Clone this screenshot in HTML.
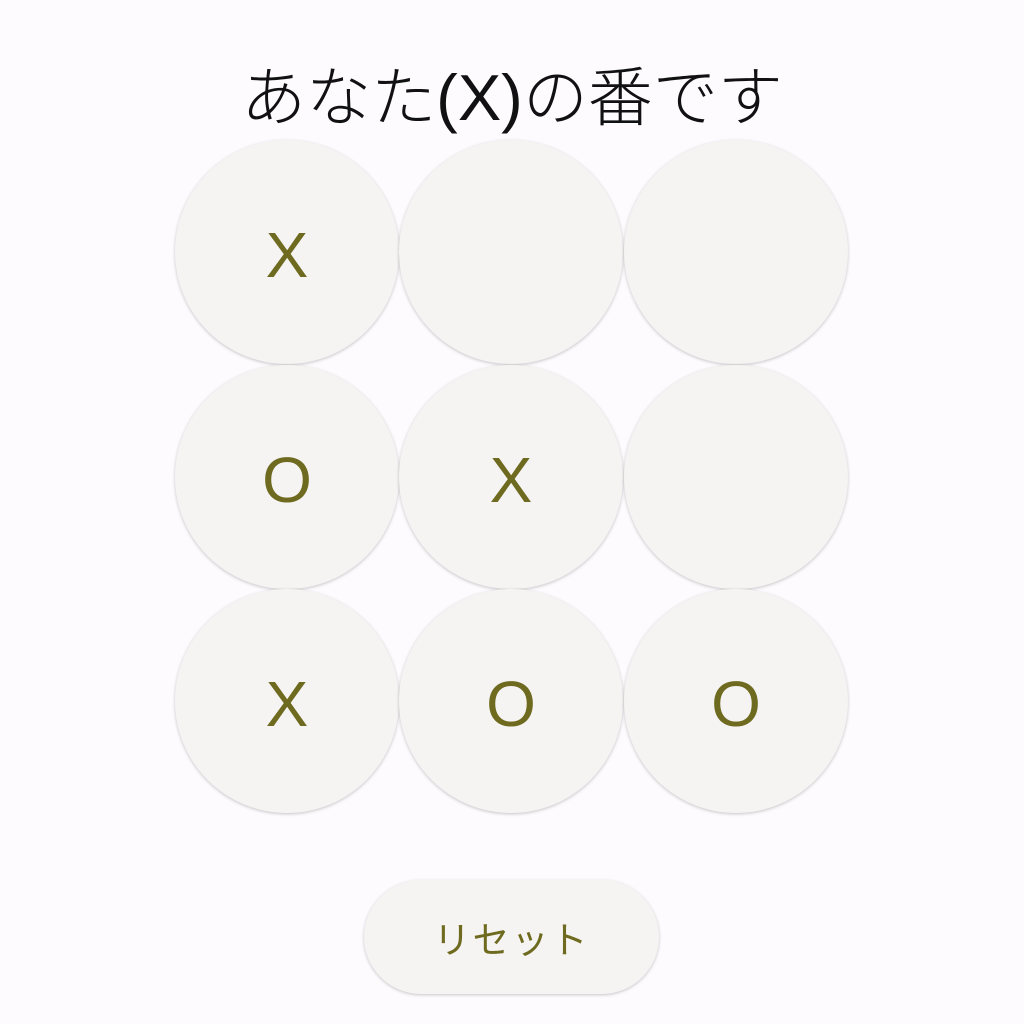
<!DOCTYPE html>
<html><head><meta charset="utf-8"><style>
body{margin:0;width:1024px;height:1024px;background:#fdfbfe;position:relative;overflow:hidden;font-family:"Liberation Sans","Noto Sans CJK JP",sans-serif}
.t{position:absolute;left:0;width:1024px;top:52px;text-align:center;font-size:65px;line-height:80px;color:#111;font-family:"Noto Sans CJK JP",sans-serif;font-weight:300}
.t span{font-family:"Liberation Sans",sans-serif;font-weight:400}
.c{position:absolute;width:224px;height:224px;border-radius:50%;background:#f6f4f2;box-shadow:0 1px 3px rgba(0,0,0,.22);display:flex;align-items:center;justify-content:center;color:#6e6a1f;font-size:64px;padding-top:6px;box-sizing:border-box}
.b{position:absolute;left:364px;top:880px;width:295px;height:114px;border-radius:57px;background:#f6f4f2;box-shadow:0 1px 3px rgba(0,0,0,.22);display:flex;align-items:center;justify-content:center;color:#6e6a1f;font-size:37px;letter-spacing:2px;font-family:"Noto Sans CJK JP",sans-serif}
</style></head><body>
<div class="t">あなた<span>(X)</span>の番です</div>
<div class="c" style="left:175px;top:140px">X</div>
<div class="c" style="left:399px;top:140px"></div>
<div class="c" style="left:624px;top:140px"></div>
<div class="c" style="left:175px;top:365px">O</div>
<div class="c" style="left:399px;top:365px">X</div>
<div class="c" style="left:624px;top:365px"></div>
<div class="c" style="left:175px;top:589px">X</div>
<div class="c" style="left:399px;top:589px">O</div>
<div class="c" style="left:624px;top:589px">O</div>
<div class="b">リセット</div>
</body></html>
